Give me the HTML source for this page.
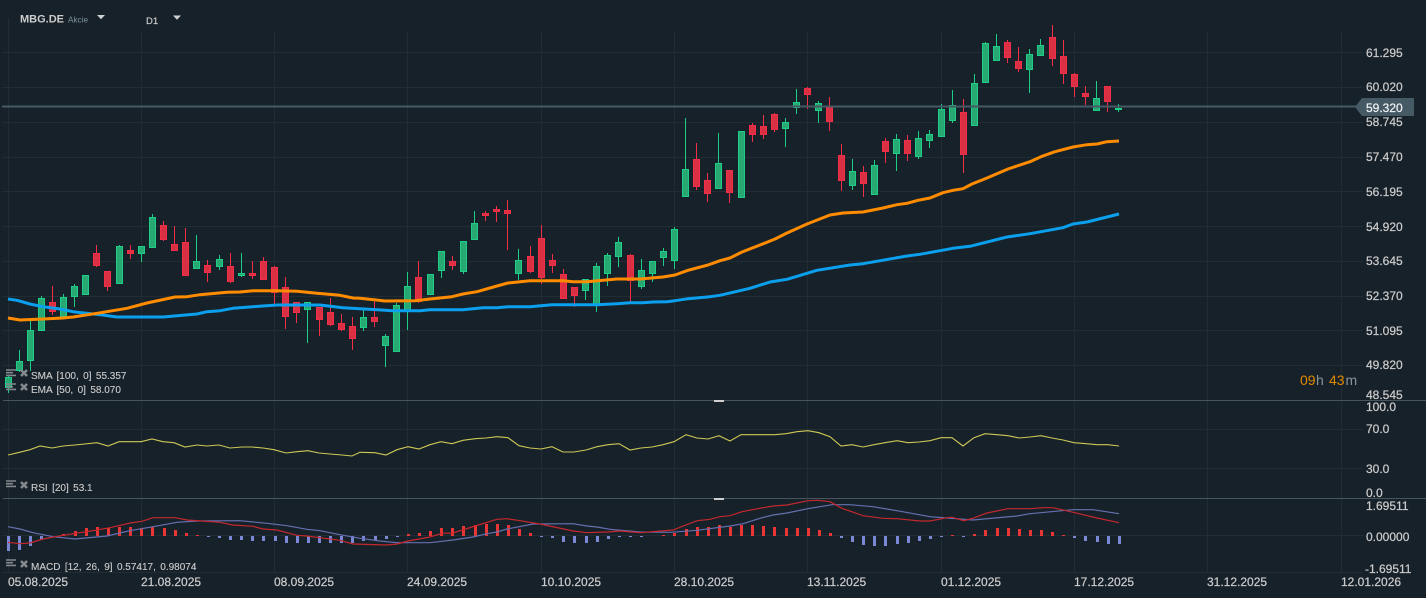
<!DOCTYPE html>
<html lang="de"><head><meta charset="utf-8"><title>MBG.DE</title>
<style>
html,body{margin:0;padding:0;background:#172129;width:1426px;height:598px;overflow:hidden}
svg{display:block}
text{font-family:"Liberation Sans",Arial,sans-serif;fill:#ccc;white-space:pre}
.y{font-size:12px;stroke:#ccc;stroke-width:.22px}
.d{font-size:12px;stroke:#ccc;stroke-width:.22px}
.l{font-size:10px;word-spacing:1.62px;stroke:#ccc;stroke-width:.12px}
</style></head><body>
<svg width="1426" height="598" viewBox="0 0 1426 598" xmlns="http://www.w3.org/2000/svg">
<rect width="1426" height="598" fill="#172129"/>
<path fill="none" stroke="#212c33" stroke-width="1" d="M8.5 18V573M141.5 32V573M274.5 32V573M407.5 32V573M541.5 32V573M674.5 32V573M807.5 32V573M941.5 32V573M1074.5 32V573M1207.5 32V573M1341.5 32V573"/>
<path fill="none" stroke="#212c33" stroke-width="1" d="M2 52.5H1363M2 87.5H1363M2 122.5H1363M2 157.5H1363M2 191.5H1363M2 226.5H1363M2 261.5H1363M2 296.5H1363M2 330.5H1363M2 365.5H1363M2 429.5H1363M2 468.5H1363M2 535.5H1363M2 572.5H1363"/>

<!-- candle wicks -->
<path fill="none" stroke="#1dcf86" stroke-width="1" d="M8.5 375V393M19.5 350V372M30.5 321V371M41.5 296V331M63.5 294V318M74.5 284V307M119.5 245V247M141.5 246V262M152.5 214V218M196.5 235V262M219.5 255V270M241.5 253V277M307.5 302V343M363.5 310V331M385.5 334V367M396.5 303V306M407.5 272V330M441.5 251V278M463.5 271V274M474.5 211V224M518.5 249V280M585.5 290V300M596.5 263V312M607.5 253V286M618.5 237V267M641.5 259V289M652.5 273V282M663.5 248V266M674.5 227V269M685.5 118V170M718.5 133V164M785.5 118V147M796.5 89V114M818.5 101V123M852.5 159V190M874.5 160V166M896.5 134V171M918.5 131V159M929.5 130V148M941.5 104V110M952.5 90V123M974.5 74V84M985.5 42V44M996.5 34V47M1029.5 49V93M1040.5 39V46M1096.5 81V99M1118.5 104V112"/>
<path fill="none" stroke="#f52e48" stroke-width="1" d="M52.5 286V315M96.5 245V267M107.5 286V291M130.5 245V259M163.5 221V241M174.5 226V245M185.5 228V243M207.5 260V282M230.5 253V283M252.5 261V279M263.5 257V262M274.5 266V305M285.5 277V329M296.5 312V323M319.5 307V336M330.5 298V326M341.5 314V331M352.5 317V350M374.5 298V327M418.5 261V303M452.5 256V270M485.5 211V221M496.5 206V222M507.5 200V250M530.5 246V273M541.5 225V284M552.5 254V273M563.5 269V275M574.5 295V307M630.5 254V302M696.5 143V190M707.5 173V202M729.5 192V203M752.5 123V142M763.5 115V139M774.5 113V132M807.5 87V109M829.5 97V131M841.5 144V191M863.5 166V197M885.5 138V163M907.5 135V161M963.5 99V173M1007.5 40V63M1018.5 47V72M1052.5 25V66M1063.5 40V84M1074.5 73V97M1085.5 86V105M1107.5 101V112"/>
<!-- candle bodies -->
<path fill="#28a873" stroke="#1dcf86" stroke-width="1" d="M5.5 377.5h6v10h-6zM16.5 361.5h6v9h-6zM27.5 330.5h6v30h-6zM38.5 298.5h6v32h-6zM60.5 297.5h6v19h-6zM71.5 286.5h6v10h-6zM82.5 275.5h6v19h-6zM116.5 246.5h6v37h-6zM138.5 246.5h6v7h-6zM149.5 217.5h6v30h-6zM193.5 261.5h6v7h-6zM216.5 259.5h6v7h-6zM238.5 273.5h6v2h-6zM304.5 302.5h6v7h-6zM360.5 317.5h6v10h-6zM382.5 336.5h6v9h-6zM393.5 305.5h6v46h-6zM404.5 286.5h6v24h-6zM427.5 274.5h6v20h-6zM438.5 251.5h6v19h-6zM460.5 241.5h6v30h-6zM471.5 223.5h6v16h-6zM515.5 260.5h6v13h-6zM582.5 279.5h6v11h-6zM593.5 266.5h6v38h-6zM604.5 255.5h6v18h-6zM615.5 242.5h6v14h-6zM638.5 270.5h6v16h-6zM649.5 261.5h6v12h-6zM660.5 251.5h6v6h-6zM671.5 229.5h6v31h-6zM682.5 169.5h6v27h-6zM715.5 163.5h6v25h-6zM738.5 131.5h6v66h-6zM782.5 122.5h6v6h-6zM793.5 102.5h6v5h-6zM815.5 103.5h6v7h-6zM849.5 171.5h6v14h-6zM871.5 165.5h6v29h-6zM893.5 139.5h6v14h-6zM915.5 138.5h6v18h-6zM926.5 134.5h6v6h-6zM938.5 109.5h6v27h-6zM949.5 105.5h6v15h-6zM971.5 83.5h6v42h-6zM982.5 43.5h6v39h-6zM993.5 46.5h6v14h-6zM1026.5 54.5h6v15h-6zM1037.5 45.5h6v10h-6zM1093.5 98.5h6v12h-6zM1115.5 108.5h6v1h-6z"/>
<path fill="#da3043" stroke="#f52e48" stroke-width="1" d="M49.5 302.5h6v9h-6zM93.5 253.5h6v12h-6zM104.5 271.5h6v15h-6zM127.5 250.5h6v3h-6zM160.5 225.5h6v14h-6zM171.5 244.5h6v6h-6zM182.5 242.5h6v33h-6zM204.5 265.5h6v7h-6zM227.5 266.5h6v15h-6zM249.5 273.5h6v2h-6zM260.5 261.5h6v18h-6zM271.5 267.5h6v25h-6zM282.5 287.5h6v29h-6zM293.5 302.5h6v10h-6zM316.5 307.5h6v12h-6zM327.5 312.5h6v12h-6zM338.5 323.5h6v6h-6zM349.5 326.5h6v12h-6zM371.5 317.5h6v4h-6zM415.5 277.5h6v24h-6zM449.5 261.5h6v4h-6zM482.5 213.5h6v2h-6zM493.5 209.5h6v2h-6zM504.5 210.5h6v3h-6zM527.5 256.5h6v15h-6zM538.5 238.5h6v39h-6zM549.5 260.5h6v5h-6zM560.5 274.5h6v24h-6zM571.5 287.5h6v8h-6zM627.5 255.5h6v25h-6zM693.5 159.5h6v27h-6zM704.5 180.5h6v13h-6zM726.5 170.5h6v22h-6zM749.5 125.5h6v9h-6zM760.5 126.5h6v8h-6zM771.5 114.5h6v15h-6zM804.5 88.5h6v6h-6zM826.5 107.5h6v14h-6zM838.5 155.5h6v25h-6zM860.5 172.5h6v11h-6zM882.5 141.5h6v10h-6zM904.5 140.5h6v13h-6zM960.5 112.5h6v42h-6zM1004.5 42.5h6v15h-6zM1015.5 61.5h6v7h-6zM1049.5 37.5h6v21h-6zM1060.5 56.5h6v17h-6zM1071.5 74.5h6v12h-6zM1082.5 93.5h6v3h-6zM1104.5 86.5h6v15h-6z"/>

<!-- SMA 100 -->
<polyline fill="none" stroke="#0aa0ee" stroke-width="3" stroke-linejoin="round" points="8,299 17,300.3 30,304 43,306.7 60,309 73,311.7 100,314.7 117,317 163,317 197,314 207,311.7 220,310.7 233,308.3 253,306.7 277,305 320,305 343,307.7 360,308.7 393,310.7 420,310.7 430,309.7 463,309.7 483,307.7 497,307.7 508,306.7 530,306.7 552,304.7 597,304.7 617,303.7 630,302.7 643,302.7 653,302 667,301.7 675,300.7 688,298.7 710,296.7 720,295.3 750,288.3 770,282 787,279.3 817,270.3 850,265 863,263.7 907,256 920,254.3 953,248.3 970,246.3 1007,237 1030,233.7 1063,227.7 1073,224 1087,222 1119,214"/>
<!-- EMA 50 -->
<polyline fill="none" stroke="#ff8c00" stroke-width="3" stroke-linejoin="round" points="8,318 20,320 43,319 63,318 73,317 97,313.3 127,308.3 147,303 175,297 187,296.7 200,294.7 227,292.3 240,292 253,290.7 277,290.7 297,291.3 317,293.3 340,295.3 353,298 360,298.3 385,301 415,300.7 430,299 452,296.7 463,294 477,291.7 497,286 508,283 530,280.7 563,280.7 573,281.7 587,281.7 617,279 640,279 663,277 675,275 688,270.3 708,265 720,260.7 730,258 742,252 760,245 775,239 787,233 807,224 830,215 843,213 863,212 883,208 897,204.7 907,203.3 918,200.3 930,198 943,192.7 953,190.3 963,188.7 972,184 987,178 1008,169 1030,161.7 1042,156.3 1055,151.7 1073,147 1087,144.7 1097,144 1107,141.7 1119,141"/>

<!-- price line -->
<rect x="2" y="105.5" width="1354" height="2" fill="#465a65"/>
<path d="M1355 107L1362 98H1414V116H1362Z" fill="#465a65"/>

<!-- separators -->
<rect x="3" y="400" width="1423" height="1" fill="#47555e"/>
<rect x="3" y="498" width="1423" height="1" fill="#47555e"/>
<rect x="714" y="400" width="10" height="2" fill="#cfcfcf"/>
<rect x="714" y="498" width="10" height="2" fill="#cfcfcf"/>

<!-- RSI -->
<polyline fill="none" stroke="#cdc856" stroke-width="1.1" points="8,455 18,452.7 30,449.7 40,446 52,448 63,446 75,445 97,442.7 108,446 119,441.7 141,441.7 152,439 163,441.7 174,442.7 185,447 197,445 207,446 219,445 230,448 242,447 252,447 263,448 274,449.7 286,453 297,451.7 308,450.7 319,453 330,454 342,455 352,456 360,452.3 375,452.7 386,455 397,449.7 408,446.7 419,449 430,444.7 441,441.7 452,443.7 463,440.3 475,438.7 486,438 497,436.7 508,437.7 519,445.7 530,448 541,449 552,446.7 563,452 574,452 586,450 597,446.7 608,444.7 619,443.7 630,450 641,448 652,447 663,444.7 674,441.7 686,434.7 697,438 708,439 719,435.7 730,441 741,434.7 775,434.7 786,433.7 797,431.7 808,430.7 819,432.7 830,436.7 841,446 852,444.7 863,447 874,444.7 885,442.7 897,440.7 908,442.7 919,442 930,440.7 941,437.7 952,437.7 963,446 974,437.7 985,433.7 997,434.7 1008,435.7 1019,438 1030,437 1041,435.7 1052,438 1063,440 1074,442.7 1086,443.7 1097,444.7 1108,444.7 1119,446"/>

<!-- MACD histogram -->
<path fill="#7b88d6" d="M7 536h3v15h-3zM18 536h3v14h-3zM29 536h3v10h-3zM40 536h3v4h-3zM207 536h3v1h-3zM218 536h3v2h-3zM229 536h3v4h-3zM240 536h3v4h-3zM251 536h3v5h-3zM262 536h3v5h-3zM274 536h3v5h-3zM285 536h3v7h-3zM296 536h3v7h-3zM307 536h3v7h-3zM318 536h3v7h-3zM329 536h3v7h-3zM340 536h3v7h-3zM351 536h3v7h-3zM362 536h3v5h-3zM374 536h3v4h-3zM385 536h3v3h-3zM396 536h3v1h-3zM540 536h3v1h-3zM551 536h3v2h-3zM562 536h3v6h-3zM573 536h3v7h-3zM585 536h3v7h-3zM596 536h3v6h-3zM607 536h3v3h-3zM618 536h3v1h-3zM629 536h3v1h-3zM640 536h3v1h-3zM840 536h3v2h-3zM851 536h3v6h-3zM862 536h3v9h-3zM873 536h3v10h-3zM884 536h3v10h-3zM896 536h3v8h-3zM907 536h3v7h-3zM918 536h3v5h-3zM929 536h3v3h-3zM940 536h3v1h-3zM962 536h3v1h-3zM1073 536h3v2h-3zM1084 536h3v5h-3zM1096 536h3v6h-3zM1107 536h3v8h-3zM1118 536h3v8h-3z"/>
<path fill="#e93535" d="M62 534h3v2h-3zM74 531h3v5h-3zM85 528h3v8h-3zM96 527h3v9h-3zM107 528h3v8h-3zM118 527h3v9h-3zM129 527h3v9h-3zM140 528h3v8h-3zM151 527h3v9h-3zM163 528h3v8h-3zM174 530h3v6h-3zM185 533h3v3h-3zM196 535h3v1h-3zM407 534h3v2h-3zM418 533h3v3h-3zM429 531h3v5h-3zM440 528h3v8h-3zM451 528h3v8h-3zM462 526h3v10h-3zM474 525h3v11h-3zM485 524h3v12h-3zM496 524h3v12h-3zM507 525h3v11h-3zM518 529h3v7h-3zM529 533h3v3h-3zM662 535h3v1h-3zM673 533h3v3h-3zM685 529h3v7h-3zM696 527h3v9h-3zM707 527h3v9h-3zM718 525h3v11h-3zM729 527h3v9h-3zM740 525h3v11h-3zM751 525h3v11h-3zM762 526h3v10h-3zM773 527h3v9h-3zM785 528h3v8h-3zM796 528h3v8h-3zM807 528h3v8h-3zM818 530h3v6h-3zM829 533h3v3h-3zM951 535h3v1h-3zM973 534h3v2h-3zM984 530h3v6h-3zM996 528h3v8h-3zM1007 528h3v8h-3zM1018 529h3v7h-3zM1029 530h3v6h-3zM1040 530h3v6h-3zM1051 532h3v4h-3zM1062 535h3v1h-3z"/>
<!-- MACD lines -->
<polyline fill="none" stroke="#6570b0" stroke-width="1.2" points="8,526.7 20,529 33,532.7 53,536.7 75,539 107,536 130,530.7 153,526.7 177,522.3 197,521 240,520.7 267,523.3 287,525.7 307,529.3 320,530.7 340,534.7 360,538.3 380,541 397,542.7 430,542.7 453,540 473,537 487,533.7 497,532 507,529 533,524 573,523.7 587,526 597,527 610,529.3 640,532 670,532.3 697,530.3 730,526 743,523.7 760,518.3 773,515 787,513 808,508.7 832,504.7 850,504.7 873,506.7 897,510.7 930,516.7 973,520 1017,516 1030,513.7 1073,509.7 1093,509.7 1119,513.7"/>
<polyline fill="none" stroke="#c4282e" stroke-width="1.2" points="8,542.3 20,543.7 30,543 43,539 63,535.3 97,530 110,527.7 130,523 142,521.3 153,517.7 175,517.7 187,520 220,522.3 233,525 253,526.3 263,529 277,530 297,535.3 307,536 340,540.3 353,544 387,545 397,544 408,541 430,537 442,533.3 453,533 475,526 497,519.3 507,518.7 520,520.7 540,524 573,531 587,532.7 607,532 620,531 640,532.7 673,530 697,520.7 710,519.3 720,516.7 730,515.7 742,511.7 760,508.3 773,506 787,505 808,500.7 818,500.3 830,501.7 842,508.3 863,515.7 883,518.3 897,518.7 920,521 930,521 947,517.7 952,517.3 964,520.7 973,518.3 987,513 1008,508.7 1030,508.7 1043,507.7 1053,507.7 1075,512.7 1097,518 1119,522.7"/>

<!-- legend icons -->
<g fill="none" stroke="#83898c" stroke-width="1.6">
<path d="M6 370h10M6 372.7h7M6 375.4h10M6 384h10M6 386.7h7M6 389.4h10M6 481h10M6 483.7h7M6 486.4h10M6 560h10M6 562.7h7M6 565.4h10"/>
</g>
<g fill="none" stroke="#83898c" stroke-width="2.6">
<path d="M21 370l6 6M27 370l-6 6M21 384l6 6M27 384l-6 6M21 482l6 6M27 482l-6 6M21 561l6 6M27 561l-6 6"/>
</g>

<!-- legend text -->
<text class="l" x="31" y="379">SMA [100, 0] 55.357</text>
<text class="l" x="31" y="393">EMA [50, 0] 58.070</text>
<text class="l" x="31" y="491">RSI [20] 53.1</text>
<text class="l" x="31" y="570">MACD [12, 26, 9] 0.57417, 0.98074</text>

<!-- header -->
<text x="20" y="22.5" style="font-size:11px;font-weight:700">MBG.DE</text>
<text x="68" y="22.5" style="font-size:8.2px;fill:#7f959c">Akcie</text>
<path d="M97 15h8l-4 4.2z" fill="#cfd2d3"/>
<text x="146" y="24" style="font-size:9.5px;stroke:#ccc;stroke-width:.15px">D1</text>
<path d="M173 15.5h8l-4 4.2z" fill="#cfd2d3"/>

<!-- y labels -->
<text class="y" x="1366" y="57">61.295</text>
<text class="y" x="1366" y="91">60.020</text>
<text class="y" x="1366" y="112" style="fill:#f0f2f3;stroke:#f0f2f3">59.320</text>
<text class="y" x="1366" y="126">58.745</text>
<text class="y" x="1366" y="161">57.470</text>
<text class="y" x="1366" y="196">56.195</text>
<text class="y" x="1366" y="231">54.920</text>
<text class="y" x="1366" y="265">53.645</text>
<text class="y" x="1366" y="300">52.370</text>
<text class="y" x="1366" y="335">51.095</text>
<text class="y" x="1366" y="369">49.820</text>
<text class="y" x="1366" y="399">48.545</text>
<text class="y" x="1366" y="411">100.0</text>
<text class="y" x="1366" y="433">70.0</text>
<text class="y" x="1366" y="473">30.0</text>
<text class="y" x="1366" y="497">0.0</text>
<text class="y" x="1366" y="510">1.69511</text>
<text class="y" x="1366" y="541">0.00000</text>
<text class="y" x="1365" y="573">-1.69511</text>

<!-- timer -->
<text x="1300" y="385" style="font-size:14px;fill:#e08a00">09<tspan x="1316" style="fill:#8b9498">h</tspan><tspan x="1329">43</tspan><tspan x="1345.5" style="fill:#8b9498">m</tspan></text>

<!-- date labels -->
<text class="d" x="8" y="586">05.08.2025</text>
<text class="d" x="141" y="586">21.08.2025</text>
<text class="d" x="274" y="586">08.09.2025</text>
<text class="d" x="407" y="586">24.09.2025</text>
<text class="d" x="541" y="586">10.10.2025</text>
<text class="d" x="674" y="586">28.10.2025</text>
<text class="d" x="807" y="586">13.11.2025</text>
<text class="d" x="941" y="586">01.12.2025</text>
<text class="d" x="1074" y="586">17.12.2025</text>
<text class="d" x="1207" y="586">31.12.2025</text>
<text class="d" x="1341" y="586">12.01.2026</text>
</svg>
</body></html>
